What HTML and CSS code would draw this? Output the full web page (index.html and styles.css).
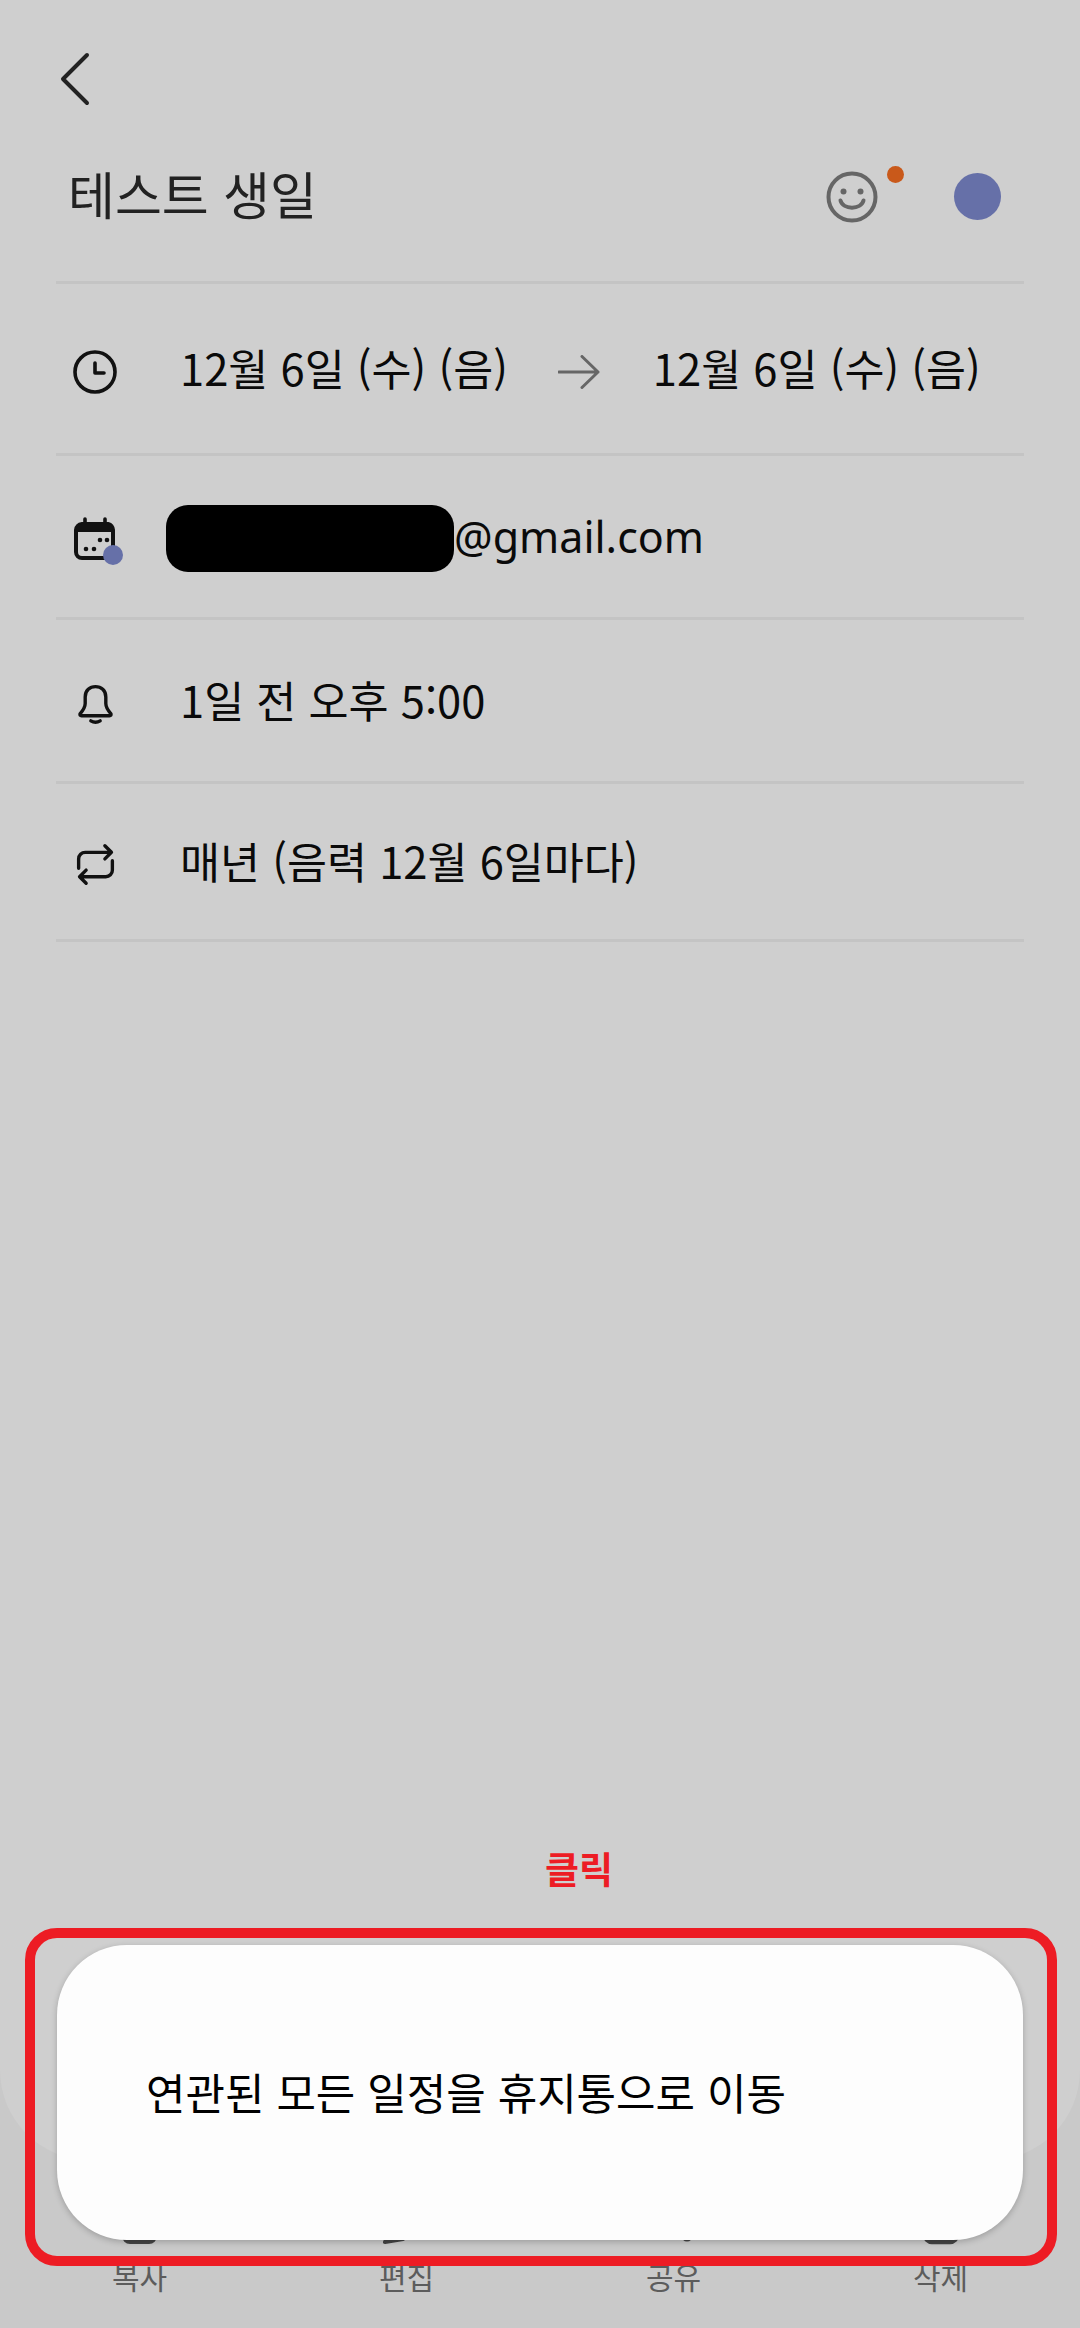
FILE: index.html
```html
<!DOCTYPE html>
<html lang="ko">
<head>
<meta charset="utf-8">
<title>테스트 생일</title>
<link rel="stylesheet" href="styles.css">
</head>
<body>
<div class="screen">
  <main class="content">
    <header class="topbar">
      <svg class="back" viewBox="0 0 34 58" width="34" height="58"><path d="M29 5 L5 29 L29 53" fill="none" stroke="#222" stroke-width="4" stroke-linecap="round" stroke-linejoin="round"/></svg>
    </header>
    <div class="title-row">
      <h1 class="title">테스트 생일</h1>
      <div class="title-actions">
        <div class="smiley-wrap">
          <svg viewBox="0 0 52 52" width="52" height="52"><circle cx="26" cy="26" r="23.5" fill="none" stroke="#666" stroke-width="4"/><circle cx="17.5" cy="20.5" r="3" fill="#666"/><circle cx="34.5" cy="20.5" r="3" fill="#666"/><path d="M14.5 29.5 C17 39 35 39 37.5 29.5" fill="none" stroke="#666" stroke-width="4" stroke-linecap="round"/></svg>
          <span class="badge"></span>
        </div>
        <span class="color-dot"></span>
      </div>
    </div>
    <div class="row">
      <svg class="icon" viewBox="0 0 48 48" width="48" height="48"><circle cx="24" cy="24" r="20" fill="none" stroke="#111" stroke-width="3.6"/><path d="M24 15 V25 H33" fill="none" stroke="#111" stroke-width="3.6" stroke-linecap="round" stroke-linejoin="round"/></svg>
      <span class="row-text">12월 6일 (수) (음)</span>
      <svg class="arrow" viewBox="0 0 42 34" width="42" height="34"><path d="M1 17 H40 M24 1.500 L40 17 L24 32.500" fill="none" stroke="#666" stroke-width="3" stroke-linecap="round" stroke-linejoin="round"/></svg>
      <span class="row-text">12월 6일 (수) (음)</span>
    </div>
    <div class="row row-short">
      <div class="icon-cal">
        <svg viewBox="0 0 48 48" width="48" height="48"><path d="M13 3 V9 M33 3 V9" stroke="#111" stroke-width="3.600" stroke-linecap="round"/><path d="M10 8 H36 A7 7 0 0 1 41 14 V36 A6 6 0 0 1 35 42 H10 A6 6 0 0 1 4 36 V14 A7 7 0 0 1 10 8 Z" fill="none" stroke="#111" stroke-width="4"/><path d="M4 14 A7 7 0 0 1 10 8 H36 A7 7 0 0 1 41 14 V16 H4 Z" fill="#111"/><circle cx="28" cy="24" r="2.300" fill="#111"/><circle cx="35" cy="24" r="2.300" fill="#111"/><circle cx="14" cy="33" r="2.300" fill="#111"/><circle cx="22" cy="33" r="2.300" fill="#111"/></svg>
        <span class="cal-dot"></span>
      </div>
      <span class="redact"></span><span class="row-text email">@gmail.com</span>
    </div>
    <div class="row row-short">
      <svg class="icon icon-small" viewBox="0 0 48 48" width="45" height="45"><path d="M7.500 35 C11 31 13 28 13 24 V17 C13 10 18 6 24 6 C30 6 35 10 35 17 V24 C35 28 37 31 40.500 35 Q41 37 39 37 H9 Q7 37 7.500 35 Z" fill="none" stroke="#111" stroke-width="3.600" stroke-linejoin="round"/><path d="M19 42.500 Q24 45.500 29 42.500" fill="none" stroke="#111" stroke-width="3.600" stroke-linecap="round"/></svg>
      <span class="row-text">1일 전 오후 5:00</span>
    </div>
    <div class="row row-last">
      <svg class="icon icon-small" viewBox="0 0 48 48" width="45" height="45"><path d="M6 28 V18 A7 7 0 0 1 13 11 H41 M34 4 L41 11 L34 18 M42 20 V30 A7 7 0 0 1 35 37 H7 M14 30 L7 37 L14 44" fill="none" stroke="#111" stroke-width="3.600" stroke-linecap="round" stroke-linejoin="round"/></svg>
      <span class="row-text">매년 (음력 12월 6일마다)</span>
    </div>
  </main>

  <nav class="bottom-nav">
    <div class="nav-item">
      <svg viewBox="0 0 48 48" width="48" height="48"><rect x="8" y="12" width="31" height="33" rx="6" fill="none" stroke="#444" stroke-width="4"/></svg>
      <span class="nav-label">복사</span>
    </div>
    <div class="nav-item">
      <svg viewBox="0 0 48 48" width="48" height="48"><path d="M2 45 L20 42 L40 14 L30 8 L6 36 Z" fill="none" stroke="#444" stroke-width="4" stroke-linejoin="round"/></svg>
      <span class="nav-label">편집</span>
    </div>
    <div class="nav-item">
      <svg viewBox="0 0 48 48" width="48" height="48"><circle cx="37" cy="39" r="5.500" fill="#444"/><circle cx="37" cy="9" r="5.500" fill="#444"/><circle cx="10" cy="24" r="5.500" fill="#444"/></svg>
      <span class="nav-label">공유</span>
    </div>
    <div class="nav-item">
      <svg viewBox="0 0 48 48" width="48" height="48"><path d="M8 12 V38 A7 7 0 0 0 15 45 H33 A7 7 0 0 0 40 38 V12" fill="none" stroke="#444" stroke-width="4.500"/></svg>
      <span class="nav-label">삭제</span>
    </div>
  </nav>

  <div class="popup"><span class="popup-text">연관된 모든 일정을 휴지통으로 이동</span></div>
  <div class="callout-box"></div>
  <span class="callout-label">클릭</span>
</div>
</body>
</html>
```
FILE: styles.css
```css
* { box-sizing: border-box; }
html, body { margin: 0; padding: 0; }
body { font-family: "Noto Sans CJK KR", "Noto Sans", sans-serif; }

.screen {
  position: relative;
  width: 1080px;
  height: 2328px;
  overflow: hidden;
  background: #c9c9c9;
  display: flex;
  flex-direction: column;
}

.content {
  height: 2160px;
  padding: 0 56px;
  background: #cfcfcf;
  border-radius: 0 0 90px 90px;
  flex: none;
}

.topbar { height: 106px; padding-top: 50px; padding-left: 2px; }
.back { display: block; }

.title-row {
  height: 178px;
  display: flex;
  align-items: center;
  justify-content: space-between;
  border-bottom: 3px solid #c4c4c4;
  padding: 0 23px 0 12px;
}
.title {
  margin: 0;
  font-size: 51px;
  font-weight: 400;
  line-height: 60px;
  color: #222;
  transform: translateY(-1px);
}
.title-actions { display: flex; align-items: center; gap: 76px; transform: translateY(3px); }
.smiley-wrap { position: relative; width: 52px; height: 52px; }
.smiley-wrap svg { display: block; }
.badge {
  position: absolute;
  left: 61px;
  top: -5px;
  width: 17px;
  height: 17px;
  border-radius: 50%;
  background: #c9591a;
}
.color-dot { width: 47px; height: 47px; border-radius: 50%; background: #6670a8; }

.row {
  height: 172px;
  display: flex;
  align-items: center;
  padding: 6px 0 0 15px;
  border-bottom: 3px solid #c4c4c4;
}
.row-short { height: 164px; }
.row-last { height: 158px; }
.icon { flex: none; margin-right: 61px; }
.icon-small { margin-left: 2px; margin-right: 62px; }
.row-text {
  font-size: 43.500px;
  line-height: 60px;
  margin-bottom: 8px;
  color: #0a0a0a;
  white-space: nowrap;
}
.arrow { flex: none; margin: 0 53px 0 50px; }

.icon-cal { position: relative; width: 48px; height: 48px; margin-right: 47px; margin-left: 1px; flex: none; }
.icon-cal svg { display: block; }
.cal-dot {
  position: absolute;
  left: 31px;
  top: 29px;
  width: 20px;
  height: 20px;
  border-radius: 50%;
  background: #6670a8;
}
.redact { width: 288px; height: 67px; border-radius: 22px; background: #000; flex: none; margin: 0 0 3px -1px; }
.email { font-family: "Noto Sans", sans-serif; font-size: 43px; margin-bottom: 6px; }

.bottom-nav {
  flex: 1;
  display: grid;
  grid-template-columns: repeat(4, 267px);
  padding: 37px 0 0 6px;
}
.nav-item { display: flex; flex-direction: column; align-items: center; }
.nav-item svg { display: block; }
.nav-label { font-size: 30px; line-height: 44px; margin-top: 9px; color: #5c5c5c; }

.popup {
  position: absolute;
  left: 57px;
  top: 1945px;
  width: 966px;
  height: 295px;
  display: flex;
  align-items: center;
  padding: 0 0 4px 89px;
  background: #fdfdfd;
  border-radius: 70px;
  box-shadow: 0 2px 6px rgba(0, 0, 0, 0.22);
}
.popup-text { font-size: 42.900px; line-height: 60px; color: #000; white-space: nowrap; }

.callout-box {
  position: absolute;
  left: 25px;
  top: 1928px;
  width: 1032px;
  height: 338px;
  border: 10px solid #ed1c24;
  border-radius: 32px;
}
.callout-label {
  position: absolute;
  left: 545px;
  top: 1843px;
  font-size: 37px;
  font-weight: 700;
  line-height: 50px;
  color: #ed1c24;
}
```
